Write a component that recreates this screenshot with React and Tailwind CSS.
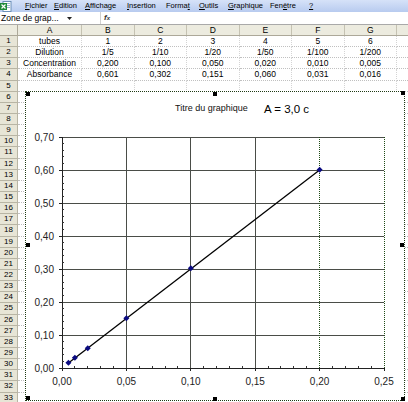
import React from 'react';

const MENU = [
  { pre: '', u: 'F', post: 'ichier', w: 29 },
  { pre: '', u: 'E', post: 'dition', w: 31 },
  { pre: '', u: 'A', post: 'ffichage', w: 42 },
  { pre: '', u: 'I', post: 'nsertion', w: 39 },
  { pre: 'Forma', u: 't', post: '', w: 33 },
  { pre: '', u: 'O', post: 'utils', w: 29 },
  { pre: '', u: 'G', post: 'raphique', w: 42 },
  { pre: 'Fen', u: 'ê', post: 'tre', w: 39 },
  { pre: '', u: '?', post: '', w: 12 },
];

const COLS = ['A', 'B', 'C', 'D', 'E', 'F', 'G'];

const DATA = [
  ['tubes', '1', '2', '3', '4', '5', '6'],
  ['Dilution', '1/5', '1/10', '1/20', '1/50', '1/100', '1/200'],
  ['Concentration', '0,200', '0,100', '0,050', '0,020', '0,010', '0,005'],
  ['Absorbance', '0,601', '0,302', '0,151', '0,060', '0,031', '0,016'],
];

const POINTS = [
  [0.005, 0.016], [0.01, 0.031], [0.02, 0.06], [0.05, 0.151], [0.1, 0.302], [0.2, 0.601],
];

const colW = (i) => (i === 0 ? 'w-[64px]' : 'w-[52.5px]');

// plot area in page coordinates
const X0 = 62, X1 = 384, Y0 = 368, Y1 = 137;
const px = (v) => X0 + (v / 0.25) * (X1 - X0);
const py = (v) => Y0 - (v / 0.7) * (Y0 - Y1);

function Handle({ className }) {
  return <div className={`absolute w-[4px] h-[4px] bg-black ${className}`} />;
}

function Chart() {
  const yTicks = [0, 0.1, 0.2, 0.3, 0.4, 0.5, 0.6, 0.7];
  const xTicks = [0, 0.05, 0.1, 0.15, 0.2, 0.25];
  const fmt = (v) => v.toFixed(2).replace('.', ',');
  const minorY = [];
  for (let i = 0; i <= 35; i++) if (i % 5) minorY.push(i * 0.02);
  const minorX = [];
  for (let i = 0; i <= 25; i++) if (i % 5) minorX.push(i * 0.01);

  return (
    <div className="absolute left-[25px] top-[91px] w-[380px] h-[310px] bg-white border border-dotted border-[#1e3a14]">
      <svg className="absolute left-0 top-0" width="378" height="308" style={{ fontFamily: '"Liberation Sans", Arial, sans-serif' }}>
        <g transform="translate(-26 -92)">
          <text x="175" y="111" fontSize="9" fill="#111">Titre du graphique</text>
          <text x="264" y="113" fontSize="11.5" fill="#000">A = 3,0 c</text>

          {yTicks.slice(1).map((v) => (
            <line key={'h' + v} x1={X0} x2={X1} y1={py(v)} y2={py(v)} stroke="#4a4d48" strokeWidth="1" shapeRendering="crispEdges" />
          ))}
          {xTicks.slice(1).map((v) => (
            <line
              key={'v' + v}
              x1={px(v)} x2={px(v)} y1={Y1} y2={Y0}
              stroke={v >= 0.2 ? '#1f4a16' : '#4a4d48'}
              strokeDasharray={v >= 0.2 ? '1 1' : undefined}
              strokeWidth="1"
              shapeRendering="crispEdges"
            />
          ))}

          <line x1={X0} x2={X0} y1={Y1} y2={Y0} stroke="#222" strokeWidth="1" shapeRendering="crispEdges" />
          <line x1={X0} x2={X1} y1={Y0} y2={Y0} stroke="#222" strokeWidth="1" shapeRendering="crispEdges" />

          {yTicks.map((v) => (
            <g key={'yt' + v}>
              <line x1={X0 - 3} x2={X0} y1={py(v)} y2={py(v)} stroke="#222" shapeRendering="crispEdges" />
              <text x="54" y={py(v) + 3.5} fontSize="10" textAnchor="end" fill="#222">{fmt(v)}</text>
            </g>
          ))}
          {minorY.map((v) => (
            <line key={'my' + v} x1={X0} x2={X0 + 2} y1={py(v)} y2={py(v)} stroke="#333" shapeRendering="crispEdges" />
          ))}
          {xTicks.map((v) => (
            <g key={'xt' + v}>
              <line x1={px(v)} x2={px(v)} y1={Y0} y2={Y0 + 3} stroke="#222" shapeRendering="crispEdges" />
              <text x={px(v)} y="385" fontSize="10" textAnchor="middle" fill="#222">{fmt(v)}</text>
            </g>
          ))}
          {minorX.map((v) => (
            <line key={'mx' + v} x1={px(v)} x2={px(v)} y1={Y0 - 2} y2={Y0} stroke="#333" shapeRendering="crispEdges" />
          ))}

          <line x1={px(0.005)} y1={py(0.015)} x2={px(0.2)} y2={py(0.6)} stroke="#000" strokeWidth="1.3" />
          {POINTS.map(([x, y]) => (
            <polygon
              key={x}
              points={`${px(x)},${py(y) - 3} ${px(x) + 3},${py(y)} ${px(x)},${py(y) + 3} ${px(x) - 3},${py(y)}`}
              fill="#0a0a80"
            />
          ))}
        </g>
      </svg>
      <Handle className="left-0 top-0" />
      <Handle className="left-[187px] top-0" />
      <Handle className="right-[-1px] top-[-1px]" />
      <Handle className="left-0 top-[151px]" />
      <Handle className="right-0 top-[151px]" />
      <Handle className="left-0 bottom-0" />
      <Handle className="left-[187px] bottom-[-1px]" />
      <Handle className="right-[-1px] bottom-[-1px]" />
    </div>
  );
}

export default function App() {
  const rows = Array.from({ length: 33 }, (_, i) => i + 1);
  return (
    <div
      className="relative w-[408px] h-[402px] overflow-hidden bg-white text-black"
      style={{ fontFamily: '"Liberation Sans", Arial, sans-serif' }}
    >
      {/* menu bar */}
      <div className="flex items-center h-[12px] bg-gradient-to-b from-[#d6e2f8] to-[#b8cbef] text-[7.5px] leading-none">
        <svg width="12" height="11" viewBox="0 0 12 11" className="shrink-0">
          <rect x="3" y="0.5" width="8" height="10" fill="#fff" stroke="#6b8fb8" />
          <rect x="4" y="2" width="6" height="1" fill="#9cb6d4" />
          <rect x="4" y="4" width="6" height="1" fill="#9cb6d4" />
          <rect x="4" y="6" width="6" height="1" fill="#9cb6d4" />
          <rect x="0" y="2" width="7" height="7" fill="#1f8a3a" />
          <path d="M1.5 3.5 L5.5 7.5 M5.5 3.5 L1.5 7.5" stroke="#fff" strokeWidth="1.2" />
        </svg>
        <div className="w-[13px] shrink-0" />
        {MENU.map((m) => (
          <span key={m.pre + m.u + m.post} className="shrink-0 whitespace-nowrap" style={{ width: m.w }}>
            {m.pre}<span className="underline">{m.u}</span>{m.post}
          </span>
        ))}
      </div>

      {/* formula bar */}
      <div className="flex items-center h-[13px] bg-white border-b border-[#a9a9a9] text-[8.5px] leading-none">
        <div className="w-[63px] pl-[1px] whitespace-nowrap">Zone de grap...</div>
        <div className="w-[12px] flex justify-center">
          <svg width="5" height="3" viewBox="0 0 5 3"><path d="M0 0 H5 L2.5 3 Z" fill="#222" /></svg>
        </div>
        <div className="w-[26px] h-full border-r border-[#d0d0d0]" />
        <div className="pl-[3px] italic font-bold text-[8px] text-[#333]">f<span className="text-[6px]">x</span></div>
        <div className="flex-1" />
      </div>

      {/* sheet */}
      <div className="text-[8.5px] leading-none">
        <div className="flex h-[11px] bg-[#ecebdf] border-b border-[#aca899]">
          <div className="w-[18px] shrink-0 border-r border-[#aca899]" />
          {COLS.map((c, i) => (
            <div key={c} className={`${colW(i)} shrink-0 flex items-center justify-center border-r border-[#c5c2b2]`}>{c}</div>
          ))}
          <div className="flex-1" />
        </div>
        {rows.map((r) => (
          <div key={r} className="flex h-[11.15px]">
            <div className="w-[18px] shrink-0 flex items-center justify-center bg-[#e7e5d6] border-r border-b border-[#b8b5a4] text-[8px]">{r}</div>
            {COLS.map((c, i) => (
              <div
                key={c}
                className={`${colW(i)} shrink-0 flex items-center justify-center border-r border-[#d4d4d4] border-b border-b-[#c0c0c0] border-dotted whitespace-nowrap`}
              >
                {DATA[r - 1] ? DATA[r - 1][i] : ''}
              </div>
            ))}
            <div className="flex-1 border-b border-dotted border-[#c0c0c0]" />
          </div>
        ))}
      </div>

      <Chart />
    </div>
  );
}
